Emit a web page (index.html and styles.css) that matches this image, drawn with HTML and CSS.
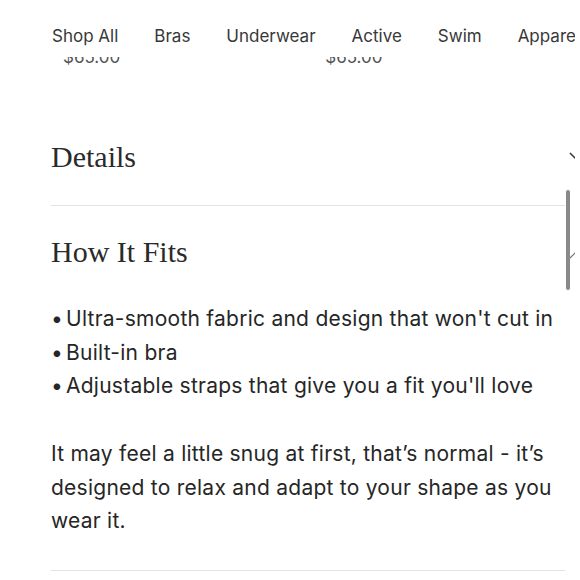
FILE: index.html
```html
<!DOCTYPE html>
<html lang="en">
<head>
<meta charset="utf-8">
<title>How It Fits</title>
<link rel="stylesheet" href="styles.css">
</head>
<body>
<div class="page">
  <nav class="nav">
    <a class="nav-item">Shop All</a>
    <a class="nav-item">Bras</a>
    <a class="nav-item">Underwear</a>
    <a class="nav-item">Active</a>
    <a class="nav-item">Swim</a>
    <a class="nav-item">Apparel</a>
  </nav>
  <div class="prices">
    <span class="price">$65.00</span>
    <span class="price">$65.00</span>
  </div>
  <main class="accordion">
    <section class="acc acc-closed">
      <div class="acc-head">
        <h2 class="acc-title">Details</h2>
        <svg class="chev" width="14" height="9" viewBox="0 0 14 9"><path d="M1 1 L7 7 L13 1" fill="none" stroke="#333" stroke-width="1.5"/></svg>
      </div>
    </section>
    <section class="acc acc-open">
      <div class="acc-head">
        <h2 class="acc-title">How It Fits</h2>
        <svg class="chev chev-up" width="14" height="9" viewBox="0 0 14 9"><path d="M1 8 L7 2 L13 8" fill="none" stroke="#777" stroke-width="1.2"/></svg>
      </div>
      <div class="acc-body">
        <ul class="fit-list">
          <li>Ultra-smooth fabric and design that won't cut in</li>
          <li>Built-in bra</li>
          <li>Adjustable straps that give you a fit you'll love</li>
        </ul>
        <p class="fit-note">It may feel a little snug at first, that’s normal - it’s designed to relax and adapt to your shape as you wear it.</p>
      </div>
    </section>
  </main>
  <div class="scrollbar"></div>
</div>
</body>
</html>
```
FILE: styles.css
```css
html, body {
  margin: 0;
  padding: 0;
  background: #fff;
  overflow: hidden;
}
body {
  font-family: Inter, "Noto Sans", sans-serif;
  color: #2b2b2b;
}
.page {
  width: 575px;
  height: 580px;
  overflow: hidden;
  position: relative;
}
.nav {
  display: flex;
  gap: 36px;
  padding: 26px 0 0 52px;
  height: 31px;
  white-space: nowrap;
}
.nav-item {
  font-size: 17px;
  line-height: 20px;
  color: #383838;
  flex: none;
}
.prices {
  display: flex;
  align-items: flex-end;
  height: 10px;
  overflow: hidden;
  padding-left: 63px;
  gap: 205px;
}
.price {
  font-size: 17px;
  line-height: 20px;
  color: #555;
  flex: none;
}
.accordion {
  width: 514px;
  margin-left: 51px;
  margin-top: 73px;
}
.acc {
  border-bottom: 1px solid #e3e3e3;
}
.acc-head {
  display: flex;
  align-items: center;
  justify-content: space-between;
}
.acc-title {
  margin: 0;
  font-family: "Liberation Serif", "DejaVu Serif", serif;
  font-weight: 400;
  font-size: 30px;
  line-height: 34px;
  color: #2a2a2a;
}
.chev {
  flex: none;
  margin-right: -18px;
  position: relative;
  top: -1px;
}
.chev-up {
  top: 2px;
}
.acc-closed {
  padding-bottom: 31px;
}
.acc-open {
  padding-top: 29px;
  padding-bottom: 32px;
}
.acc-body {
  margin-top: 33px;
}
.fit-list {
  margin: 0;
  padding: 0;
  list-style: none;
}
.fit-list li {
  font-size: 21px;
  line-height: 33.5px;
  letter-spacing: 0.25px;
  color: #262626;
  white-space: nowrap;
}
.fit-list li::before {
  content: "•";
  display: inline-block;
  width: 15px;
}
.fit-note {
  margin: 34.5px 0 0;
  font-size: 21px;
  line-height: 33.5px;
  letter-spacing: 0.25px;
  color: #262626;
}
.scrollbar {
  position: absolute;
  left: 566px;
  top: 190px;
  width: 4px;
  height: 100px;
  border-radius: 2px;
  background: #8a8a8a;
}
```
